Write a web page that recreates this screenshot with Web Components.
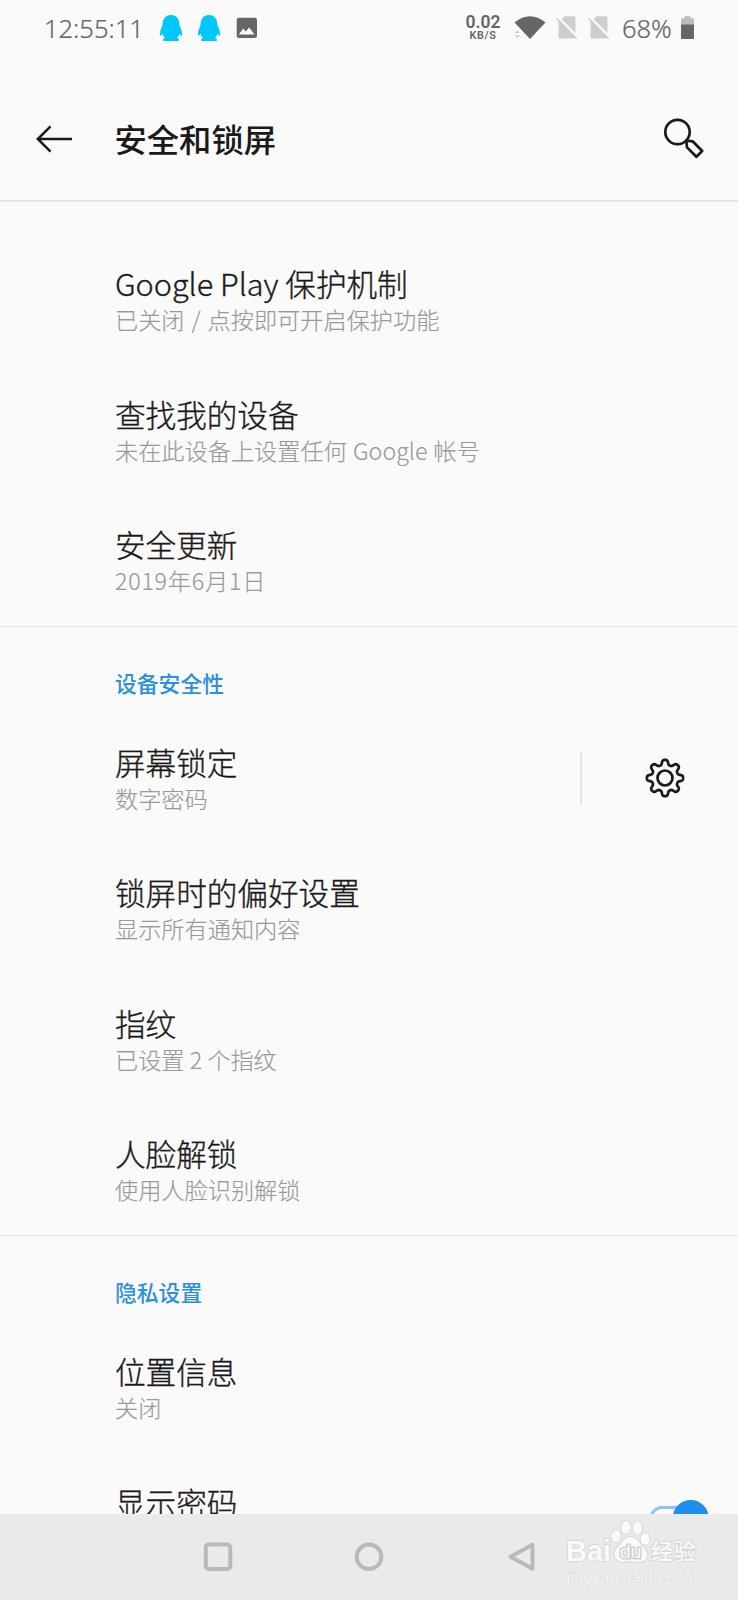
<!DOCTYPE html>
<html lang="zh-CN">
<head>
<meta charset="UTF-8">
<title>安全和锁屏</title>
<style>
  html, body { margin: 0; padding: 0; }
  body {
    width: 738px;
    height: 1600px;
    overflow: hidden;
    background: #fafafa;
    color: #1a1a1a;
    font-family: "Noto Sans CJK SC", "Noto Sans", sans-serif;
    --accent: #2b91de;
    --line: #e6e6e6;
    --muted: #999;
    --status: #666;
  }
  .date { letter-spacing: .8px; }
  .wide { word-spacing: 1.800px; }
  .loose { word-spacing: 1px; }
</style>
</head>
<body>
<settings-app>
  <status-bar slot="status" time="12:55:11" rate="0.02" battery="68%"></status-bar>
  <app-header slot="header">安全和锁屏</app-header>

  <settings-group>
    <settings-row>Google Play 保护机制<span slot="summary" class="wide">已关闭 / 点按即可开启保护功能</span></settings-row>
    <settings-row>查找我的设备<span slot="summary" class="loose">未在此设备上设置任何 Google 帐号</span></settings-row>
    <settings-row>安全更新<span slot="summary" class="date">2019年6月1日</span></settings-row>
  </settings-group>

  <settings-group heading="设备安全性">
    <settings-row>屏幕锁定<span slot="summary">数字密码</span><gear-button slot="action"></gear-button></settings-row>
    <settings-row>锁屏时的偏好设置<span slot="summary">显示所有通知内容</span></settings-row>
    <settings-row>指纹<span slot="summary">已设置 2 个指纹</span></settings-row>
    <settings-row>人脸解锁<span slot="summary">使用人脸识别解锁</span></settings-row>
  </settings-group>

  <settings-group heading="隐私设置">
    <settings-row>位置信息<span slot="summary">关闭</span></settings-row>
    <settings-row>显示密码<toggle-switch slot="action"></toggle-switch></settings-row>
  </settings-group>

  <nav-bar slot="nav"></nav-bar>
  <water-mark slot="nav"></water-mark>
</settings-app>

<script>
class BaseElement extends HTMLElement {
  constructor() {
    super();
    this.attachShadow({ mode: 'open' });
  }

  connectedCallback() {
    this.shadowRoot.innerHTML = this.template();
  }
}

class SettingsApp extends BaseElement {
  template() {
    return `
      <style>
        :host {
          display: flex;
          flex-direction: column;
          position: relative;
          width: 738px;
          height: 1600px;
          overflow: hidden;
        }
        main { flex: 1; min-height: 0; overflow: hidden; padding-top: 33px; }
      </style>
      <slot name="status"></slot>
      <slot name="header"></slot>
      <main><slot></slot></main>
      <slot name="nav"></slot>
    `;
  }
}

class StatusBar extends BaseElement {
  template() {
    const penguin = `
      <svg width="24" height="28" viewBox="0 0 24 28">
        <path fill="#00c8fc" d="M12 1C6.600 1 3.700 5 3.600 10.500C3.300 12.500 1 15.500 .9 20.500C.9 22.600 2 22 3.600 19.800C4 21.800 4.800 23 6 24C4 24.700 3.500 26 4.500 27H19.500C20.500 26 20 24.700 18 24C19.200 23 20 21.800 20.400 19.800C22 22 23.100 22.600 23.100 20.500C23 15.500 20.700 12.500 20.400 10.500C20.300 5 17.400 1 12 1Z"/>
      </svg>`;
    const noSim = `
      <svg width="22" height="24" viewBox="0 0 22 24">
        <path fill="#cdcdcd" d="M5.800 3L8.500 .2H18Q19.500 .2 19.500 1.700V16.900ZM2.500 4.500L19 21.500Q18.700 22.500 17.500 22.500H4Q2.500 22.500 2.500 21Z"/>
        <path stroke="#cdcdcd" stroke-width="1.500" d="M.5 2.300L20.800 22.800"/>
      </svg>`;
    return `
      <style>
        :host {
          display: flex;
          align-items: center;
          height: 56px;
          box-sizing: border-box;
          padding: 0 43px 0 44px;
          color: var(--status);
        }
        svg { display: block; flex: none; }
        .clock, .battery { font: 300 25.500px/56px "Noto Sans", sans-serif; white-space: nowrap; height: 56px; -webkit-text-stroke: .2px; }
        .clock { width: 115px; }
        .notes { display: flex; align-items: center; gap: 13.500px; }
        .space { flex: 1; }
        .rate {
          display: flex;
          flex-direction: column;
          align-items: center;
          width: 34px;
          margin: 0 14px 1px 0;
          font-family: Roboto, sans-serif;
          font-weight: 600;
        }
        .rate b { font-size: 17.500px; line-height: 16px; font-weight: 600; }
        .rate i { font-size: 10.800px; line-height: 12px; font-style: normal; letter-spacing: .6px; }
        .signals { display: flex; align-items: center; gap: 10.500px; }
        .signals .wifi { margin-right: -3px; }
        .battery { width: 50px; margin: 0 9px 0 12px; }
      </style>
      <span class="clock">${this.getAttribute('time')}</span>
      <div class="notes">
        ${penguin}${penguin}
        <svg width="22" height="22" viewBox="0 0 22 22" style="margin-left:2px">
          <rect x=".7" y=".7" width="20.300" height="20.300" rx="2.300" fill="#666"/>
          <path fill="#fafafa" d="M2.800 17.500L7.300 11.500L9.700 14.500L13.200 10.500L18.500 17.500Z"/>
        </svg>
      </div>
      <div class="space"></div>
      <div class="rate"><b>${this.getAttribute('rate')}</b><i>KB/S</i></div>
      <div class="signals">
        <svg class="wifi" width="34" height="24" viewBox="0 0 34 24">
          <path fill="#666" d="M.5 6.500Q16-6 31.500 6.500L16 23Z"/>
          <path fill="#cdcdcd" d="M.4 17L3.200 14.200L6 17ZM.4 19.200H6L3.200 22Z"/>
        </svg>
        ${noSim}${noSim}
      </div>
      <span class="battery">${this.getAttribute('battery')}</span>
      <svg width="14" height="24" viewBox="0 0 14 24">
        <path fill="#bdbdbd" d="M0 9V3.500Q0 2.200 1.200 2.200H3.500V.2H9.500V2.200H11.800Q13 2.200 13 3.500V9Z"/>
        <path fill="#666" d="M0 8.500H13V22Q13 23 12 23H1Q0 23 0 22Z"/>
      </svg>
    `;
  }
}

class AppHeader extends BaseElement {
  template() {
    return `
      <style>
        :host {
          display: flex;
          align-items: center;
          height: 146px;
          box-sizing: border-box;
          padding: 22px 33px 0 35px;
          border-bottom: 2px solid var(--line);
        }
        h1 { flex: 1; margin: -2px 0 0 40.500px; font-size: 32.300px; font-weight: 500; line-height: 48px; }
        svg { display: block; fill: none; stroke: #1a1a1a; }
      </style>
      <svg width="39" height="28" viewBox="0 0 39 28" stroke-width="2.500">
        <path d="M37 14H2.500M15.500 1.300L2.800 14L15.500 26.700"/>
      </svg>
      <h1><slot></slot></h1>
      <svg width="42" height="42" viewBox="0 0 42 42" stroke-width="2.700">
        <circle cx="14.500" cy="14" r="12.200"/>
        <path stroke-linejoin="round" d="M23.300 22.700L29.600 23.300L39.200 33L33.400 38.800L24 29.400Z"/>
      </svg>
    `;
  }
}

class SettingsGroup extends BaseElement {
  template() {
    const heading = this.getAttribute('heading');
    return `
      <style>
        :host { display: block; }
        h2 {
          margin: 0;
          height: 87.500px;
          box-sizing: border-box;
          padding: 40px 0 0 115px;
          border-top: 1.500px solid var(--line);
          color: var(--accent);
          font-size: 21.800px;
          font-weight: 500;
          line-height: 32px;
        }
      </style>
      ${heading ? `<h2>${heading}</h2>` : ''}
      <slot></slot>
    `;
  }
}

class SettingsRow extends BaseElement {
  template() {
    return `
      <style>
        :host {
          display: flex;
          align-items: flex-start;
          height: 130.400px;
          box-sizing: border-box;
          padding: 28.400px 0 0 115px;
        }
        .text { flex: 1; white-space: nowrap; }
        .title { font-size: 30.600px; font-weight: 300; line-height: 40px; -webkit-text-stroke: .35px; }
        .summary { color: var(--muted); font-size: 23.200px; font-weight: 300; line-height: 32.600px; -webkit-text-stroke: .15px; }
      </style>
      <div class="text">
        <div class="title"><slot></slot></div>
        <div class="summary"><slot name="summary"></slot></div>
      </div>
      <slot name="action"></slot>
    `;
  }
}

class GearButton extends BaseElement {
  // outline of an eight-toothed wheel around 0,0
  outline() {
    const points = [];
    for (let deg = 0; deg < 360; deg += 2) {
      const a = deg * Math.PI / 180;
      const r = 15.7 + 2.4 * Math.tanh(1.7 * Math.cos(8 * a)) / Math.tanh(1.7);
      points.push(`${(r * Math.sin(a)).toFixed(2)},${(-r * Math.cos(a)).toFixed(2)}`);
    }
    return points.join(' ');
  }

  template() {
    return `
      <style>
        :host {
          display: flex;
          align-items: center;
          width: 158px;
          height: 54px;
          margin-top: 8.500px;
          box-sizing: border-box;
          border-left: 2px solid var(--line);
          padding-left: 61.700px;
        }
        svg { display: block; }
      </style>
      <svg width="42" height="42" viewBox="-21 -21 42 42" fill="none" stroke="#1a1a1a" stroke-width="2.700">
        <polygon stroke-linejoin="round" points="${this.outline()}"/>
        <circle r="7.500"/>
      </svg>
    `;
  }
}

class ToggleSwitch extends BaseElement {
  template() {
    return `
      <style>
        :host { display: block; width: 89px; margin-top: 17px; }
        svg { display: block; }
      </style>
      <svg width="60" height="38" viewBox="0 0 60 38">
        <rect x="2" y="8.500" width="52" height="22" rx="11" fill="none" stroke="#8cc3f2" stroke-width="3"/>
        <circle cx="41.700" cy="19" r="18" fill="#1f8fee"/>
      </svg>
    `;
  }
}

class NavBar extends BaseElement {
  template() {
    return `
      <style>
        :host {
          display: flex;
          flex: none;
          align-items: center;
          height: 86px;
          box-sizing: border-box;
          padding-left: 202px;
          gap: 119px;
          background: #eaeaea;
        }
        svg { display: block; fill: none; stroke: #b9b9b9; stroke-width: 4; }
      </style>
      <svg width="32" height="32" viewBox="0 0 32 32"><rect x="3.800" y="3.500" width="24.500" height="24.500" rx="3"/></svg>
      <svg width="32" height="32" viewBox="0 0 32 32"><circle cx="16" cy="15.700" r="12.300"/></svg>
      <svg width="32" height="32" viewBox="0 0 32 32"><path stroke-linejoin="round" d="M28.500 3.800V27.800L6.500 15.800Z"/></svg>
    `;
  }
}

class WaterMark extends BaseElement {
  template() {
    return `
      <style>
        :host { position: absolute; left: 562px; top: 1515px; width: 140px; height: 70px; }
        svg { display: block; overflow: visible; }
        text, .paw {
          fill: #fafafa;
          stroke: #d8d8d8;
          stroke-width: 2;
          paint-order: stroke;
        }
        .du { stroke: #cfcfcf; stroke-width: 3; }
        .url { fill: #f7f7f7; stroke: #dcdcdc; stroke-width: 1; }
      </style>
      <svg width="140" height="70" viewBox="0 0 140 70">
        <text x="4" y="45.800" font-family="Liberation Sans, sans-serif" font-weight="700" font-size="29" textLength="45" lengthAdjust="spacingAndGlyphs">Bai</text>
        <g class="paw">
          <ellipse cx="54" cy="21" rx="4.500" ry="6"/>
          <ellipse cx="64" cy="12.500" rx="4.700" ry="6.500"/>
          <ellipse cx="75.500" cy="13" rx="4.700" ry="6.500"/>
          <ellipse cx="83" cy="24" rx="4.500" ry="6"/>
          <path d="M68 22C61 22 60 29 55 33C50 38 53 46 60 47C65 47 66 46 69 46C72 46 74 47 78 47C86 46 88 39 82 33C77 29 76 22 68 22Z"/>
        </g>
        <text class="du" x="58" y="43" font-family="Liberation Sans, sans-serif" font-size="19">du</text>
        <text x="89" y="44" font-family="Noto Sans CJK SC, sans-serif" font-weight="500" font-size="22" textLength="45">经验</text>
        <text class="url" x="5" y="66" font-family="Liberation Sans, sans-serif" font-size="13.500" textLength="130" lengthAdjust="spacingAndGlyphs">jingyan.baidu.com</text>
      </svg>
    `;
  }
}

customElements.define('settings-app', SettingsApp);
customElements.define('status-bar', StatusBar);
customElements.define('app-header', AppHeader);
customElements.define('settings-group', SettingsGroup);
customElements.define('settings-row', SettingsRow);
customElements.define('gear-button', GearButton);
customElements.define('toggle-switch', ToggleSwitch);
customElements.define('nav-bar', NavBar);
customElements.define('water-mark', WaterMark);
</script>
</body>
</html>
